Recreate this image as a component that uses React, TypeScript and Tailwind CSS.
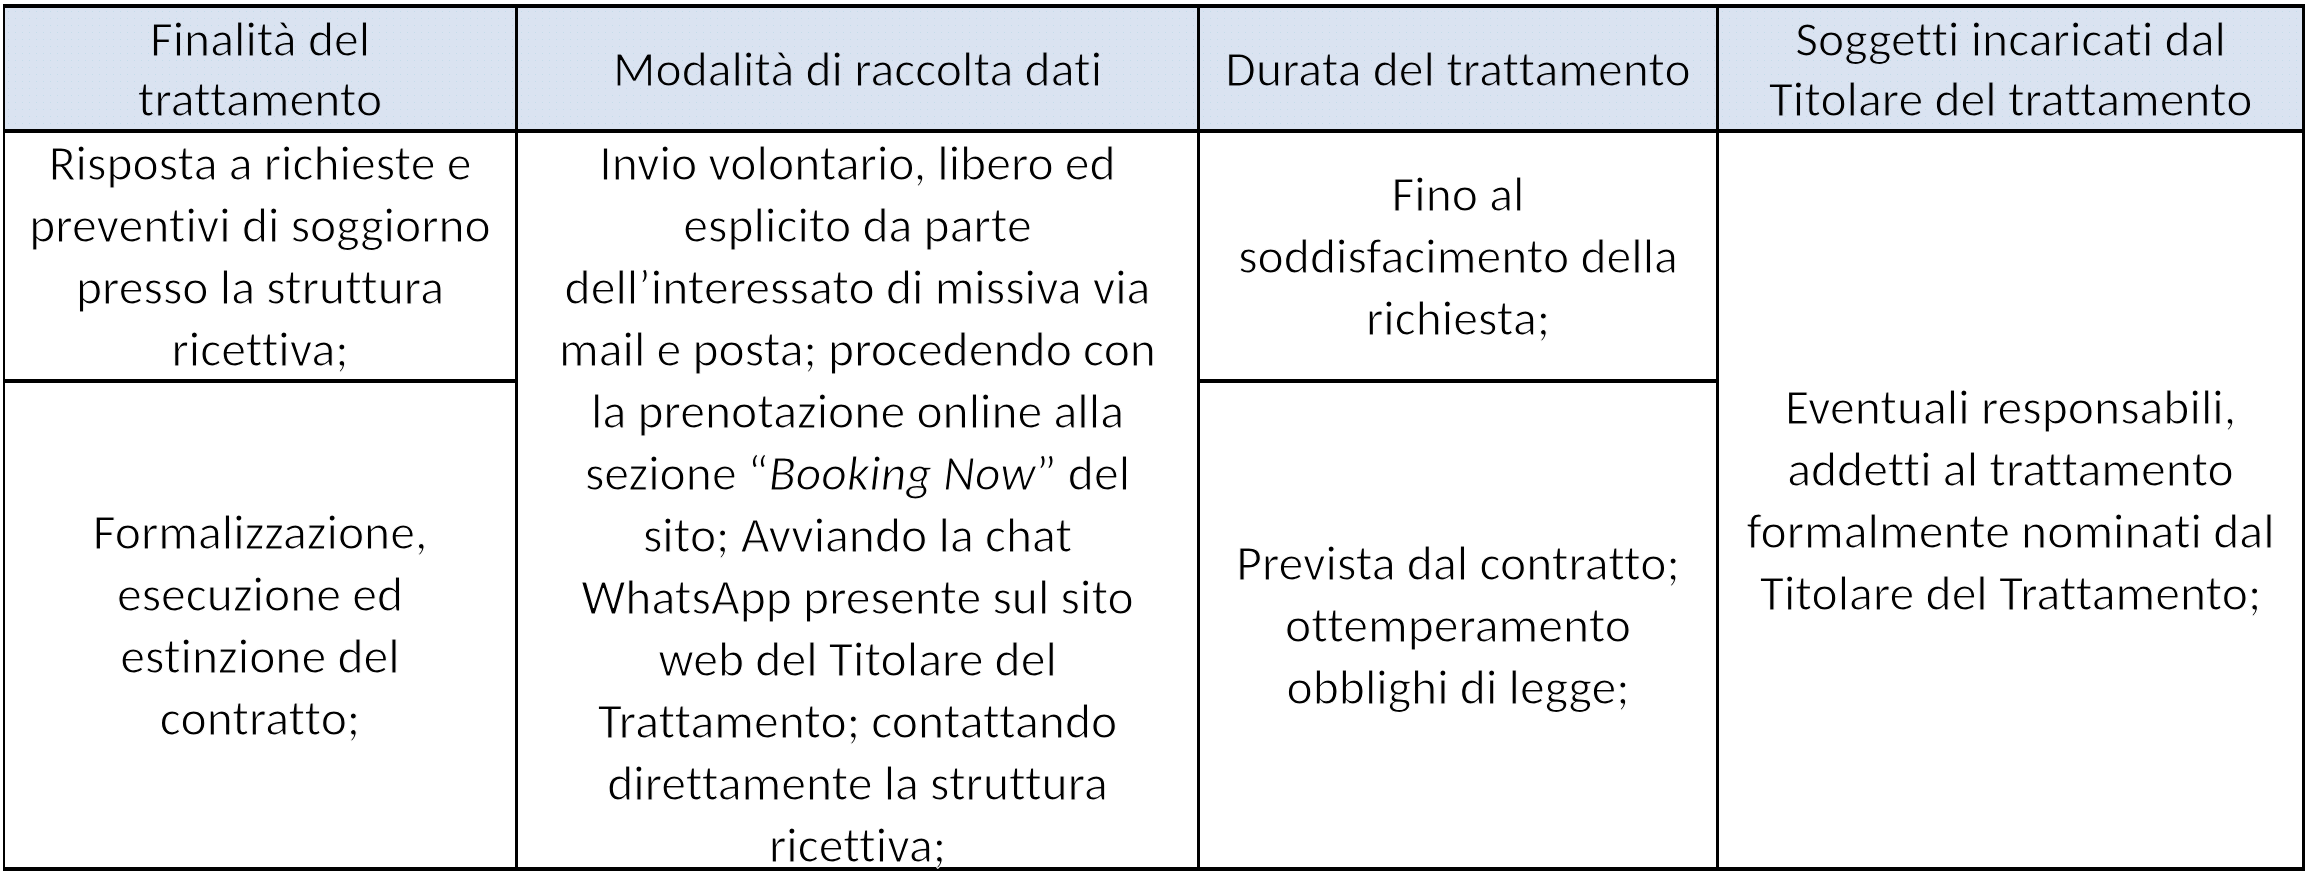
import React from "react";

const font = "font-['Carlito','Lato','Liberation_Sans',sans-serif]";

function Lines({ lines }: { lines: React.ReactNode[] }) {
  return (
    <>
      {lines.map((l, i) => (
        <div key={i} className="whitespace-nowrap">
          {l}
        </div>
      ))}
    </>
  );
}

function Head({ lines }: { lines: React.ReactNode[] }) {
  return (
    <div className="flex flex-col items-center justify-center text-center bg-[#dae3f1] bg-[radial-gradient(#c5dcea_0.7px,transparent_1px)] bg-[length:7px_7px] leading-[60px] [-webkit-text-stroke:1.1px_#dae3f1]">
      <Lines lines={lines} />
    </div>
  );
}

function Body({ lines, className = "" }: { lines: React.ReactNode[]; className?: string }) {
  return (
    <div className={"flex flex-col items-center justify-center text-center bg-white leading-[62px] [-webkit-text-stroke:1.1px_white] " + className}>
      <Lines lines={lines} />
    </div>
  );
}

export default function App() {
  return (
    <div className="w-[2310px] h-[880px] bg-white">
      <div
        className={
          "ml-[3px] mt-[4px] w-[2302px] bg-black pt-[4px] pb-[4px] pl-[2px] pr-[3px] grid grid-cols-[510px_679px_516px_583px] grid-rows-[121px_246px_484px] gap-x-[3px] gap-y-[4px] text-black text-[49.7px] [font-variant-ligatures:none] [font-feature-settings:'liga'_0,'clig'_0] " +
          font
        }
      >
        <Head lines={["Finalità del", "trattamento"]} />
        <Head lines={["Modalità di raccolta dati"]} />
        <Head lines={["Durata del trattamento"]} />
        <Head lines={["Soggetti incaricati dal", "Titolare del trattamento"]} />

        <Body lines={["Risposta a richieste e", "preventivi di soggiorno", "presso la struttura", "ricettiva;"]} />
        <div className="row-span-2 flex flex-col items-center justify-center text-center bg-white [-webkit-text-stroke:1.1px_white]">
          <div className="flex flex-col items-center gap-[12px] leading-[50px] translate-y-[4px]">
            <Lines
              lines={[
                "Invio volontario, libero ed",
                "esplicito da parte",
                "dell’interessato di missiva via",
                "mail e posta; procedendo con",
                "la prenotazione online alla",
                <>
                  sezione “<i>Booking Now</i>” del
                </>,
                "sito; Avviando la chat",
                "WhatsApp presente sul sito",
                "web del Titolare del",
                "Trattamento; contattando",
                "direttamente la struttura",
                "ricettiva;",
              ]}
            />
          </div>
        </div>
        <Body lines={["Fino al", "soddisfacimento della", "richiesta;"]} />
        <Body
          className="row-span-2"
          lines={["Eventuali responsabili,", "addetti al trattamento", "formalmente nominati dal", "Titolare del Trattamento;"]}
        />

        <Body lines={["Formalizzazione,", "esecuzione ed", "estinzione del", "contratto;"]} />
        <Body lines={["Prevista dal contratto;", "ottemperamento", "obblighi di legge;"]} />
      </div>
    </div>
  );
}
